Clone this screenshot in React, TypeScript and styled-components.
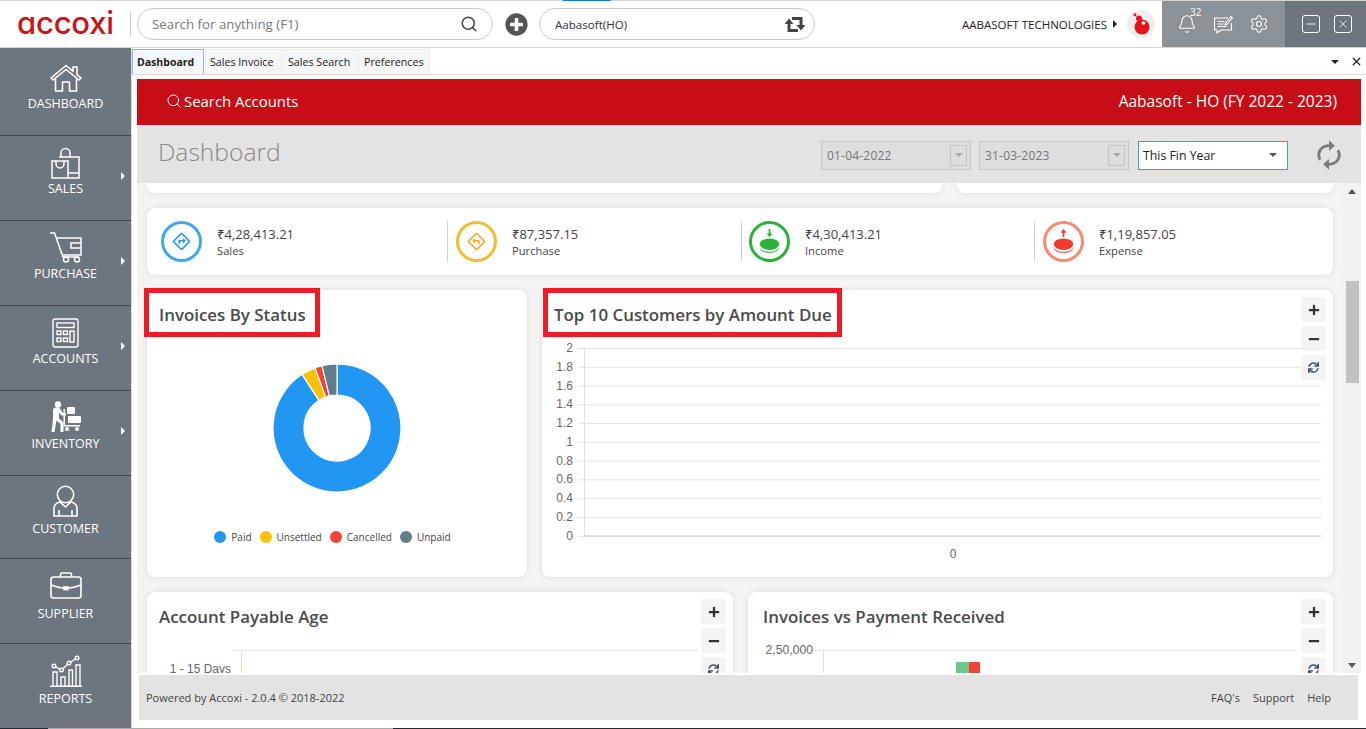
import styled, { createGlobalStyle } from "styled-components";
import { Bell, Minus, Search, Settings, X } from "lucide-react";
import { FaMinus, FaPlus, FaPlusCircle, FaSync } from "react-icons/fa";
import { MdOutlineDirections, MdSync } from "react-icons/md";

const GlobalStyle = createGlobalStyle`
  * { box-sizing: border-box; }
  html, body { margin: 0; padding: 0; background: #fff; overflow: hidden; }
  body { font-family: "Open Sans", "Noto Sans", sans-serif; color: #333; }
`;

const Page = styled.div`
  position: relative;
  display: flex;
  flex-direction: column;
  width: 1366px;
  height: 729px;
  overflow: hidden;
`;

const TopBar = styled.header`
  display: flex;
  align-items: center;
  height: 48px;
  border-top: 1px solid #d6d6d6;
  border-bottom: 1px solid #d2d2d2;
`;

const LoadingMark = styled.span`
  position: absolute;
  top: 0;
  left: 563px;
  width: 48px;
  height: 1px;
  background: #0a7bd6;
`;

const Logo = styled.div`
  width: 131px;
  height: 26px;
  padding-left: 17px;
  border-right: 1px solid #c8c8c8;
  color: #c8141c;
  font-family: Inter, "Open Sans", sans-serif;
  font-feature-settings: "cv11";
  font-size: 31px;
  font-weight: 500;
  line-height: 24px;
  letter-spacing: -0.2px;
`;

const Pill = styled.div<{ $width: number }>`
  display: flex;
  align-items: center;
  justify-content: space-between;
  width: ${({ $width }) => $width}px;
  height: 32px;
  border: 1px solid #c9c9c9;
  border-radius: 16px;
`;

const SearchPill = styled(Pill)`
  margin-left: 6px;
  padding: 0 14px;
  color: #777;
  font-size: 13.3px;
`;

const CompanyPill = styled(Pill)`
  padding: 0 9px 0 15px;
  color: #333;
  font-size: 11.6px;
`;

const AddButton = styled.span`
  display: flex;
  margin: 0 11px 0 12px;
  color: #555;
`;

const Owner = styled.div`
  display: flex;
  align-items: center;
  margin-left: auto;
  color: #222;
  font-size: 11.5px;
`;

const OwnerCaret = styled.span`
  width: 0;
  height: 0;
  margin: 0 10px 0 6px;
  border-top: 4px solid transparent;
  border-bottom: 4px solid transparent;
  border-left: 4px solid #222;
`;

const Avatar = styled.span`
  display: flex;
  align-items: center;
  justify-content: center;
  width: 28px;
  height: 28px;
  margin-right: 7px;
  border-radius: 50%;
  background: #eeeeee;
`;

const ToolGroup = styled.div`
  position: relative;
  display: flex;
  align-items: center;
  gap: 16px;
  width: 123px;
  height: 46px;
  padding-left: 15px;
  color: #fff;
  background: #8a9197;
`;

const BellCount = styled.span`
  position: absolute;
  top: 4px;
  left: 28px;
  font-size: 10px;
`;

const WindowGroup = styled.div`
  display: flex;
  align-items: center;
  gap: 14px;
  width: 81px;
  height: 46px;
  padding-left: 17px;
  background: #6d757c;
`;

const WindowButton = styled.span`
  display: flex;
  align-items: center;
  justify-content: center;
  width: 18px;
  height: 18px;
  border: 1.4px solid #fff;
  border-radius: 3px;
  color: #fff;
`;

const Body = styled.div`
  display: flex;
  flex: 1;
  min-height: 0;
`;

const Sidebar = styled.nav`
  flex: none;
  width: 132px;
  border-right: 1px solid #dedede;
  background: #6d767e;
`;

const NavItem = styled.a<{ $height: number; $top: number; $gap: number }>`
  position: relative;
  display: flex;
  flex-direction: column;
  align-items: center;
  gap: ${({ $gap }) => $gap}px;
  height: ${({ $height }) => $height}px;
  padding-top: ${({ $top }) => $top}px;
  border-bottom: 1px solid #43484d;
  color: #fff;
  font-size: 12.5px;
  line-height: 18px;
  &:last-child { border-bottom: none; }
`;

const NavIcon = styled.span`
  display: flex;
  flex: none;
  align-items: center;
  justify-content: center;
  height: 32px;
`;

const NavArrow = styled.span`
  position: absolute;
  top: 36px;
  right: 6px;
  width: 0;
  height: 0;
  border-top: 4px solid transparent;
  border-bottom: 4px solid transparent;
  border-left: 4px solid #fff;
`;

const Main = styled.main`
  display: flex;
  flex: 1;
  flex-direction: column;
  min-width: 0;
`;

const TabRow = styled.div`
  display: flex;
  align-items: flex-end;
  height: 27px;
  padding-right: 3px;
  border-bottom: 1px solid #dcdcdc;
`;

const Tab = styled.span<{ $width: number; $active?: boolean }>`
  display: flex;
  flex: none;
  align-items: center;
  width: ${({ $width }) => $width}px;
  height: 25px;
  margin-right: 1px;
  padding-left: 4px;
  border: 1px solid ${({ $active }) => ($active ? "#8db9e6" : "#eeeeee")};
  border-bottom: none;
  color: #222;
  font-size: ${({ $active }) => ($active ? 10.5 : 10.7)}px;
  font-weight: ${({ $active }) => ($active ? 700 : 400)};
  background: #f5f6f8;
`;

const TabTools = styled.div`
  display: flex;
  align-items: center;
  gap: 11px;
  height: 25px;
  margin-left: auto;
  color: #222;
`;

const TabCaret = styled.span`
  width: 0;
  height: 0;
  border-left: 4px solid transparent;
  border-right: 4px solid transparent;
  border-top: 4px solid #222;
`;

const Panel = styled.div`
  display: flex;
  flex: 1;
  flex-direction: column;
  min-height: 0;
  margin: 4px 5px 0 5px;
`;

const Banner = styled.div`
  display: flex;
  flex: none;
  align-items: center;
  justify-content: space-between;
  height: 46px;
  padding: 0 24px 2px 29px;
  color: #fff;
  font-size: 14.9px;
  background: #c70e16;
`;

const BannerSearch = styled.span`
  display: flex;
  align-items: center;
  gap: 2px;
`;

const BannerTitle = styled.span`
  font-size: 15.5px;
`;

const PageHead = styled.div`
  display: flex;
  flex: none;
  align-items: center;
  height: 58px;
  padding: 0 16px 0 21px;
  background: #e3e3e3;
`;

const PageTitle = styled.h1`
  flex: 1;
  margin: 0 0 6px;
  color: #8a8a8a;
  font-size: 24.6px;
  font-weight: 300;
`;

const DateBox = styled.div`
  display: flex;
  align-items: center;
  justify-content: space-between;
  width: 150px;
  height: 29px;
  margin: 2px 8px 0 0;
  padding: 0 3px 0 5px;
  border: 1px solid #c6c6c6;
  color: #777;
  font-size: 12px;
  letter-spacing: 0.2px;
  background: #dedede;
`;

const DateDrop = styled.span`
  display: flex;
  align-items: center;
  justify-content: center;
  width: 17px;
  height: 21px;
  border: 1px solid #c4c4c4;
`;

const GreyCaret = styled.span`
  width: 0;
  height: 0;
  border-left: 4px solid transparent;
  border-right: 4px solid transparent;
  border-top: 4px solid #a8a8a8;
`;

const Select = styled.div`
  display: flex;
  align-items: center;
  justify-content: space-between;
  width: 150px;
  height: 29px;
  margin: 2px 25px 0 1px;
  padding: 0 10px 0 4px;
  border: 1px solid #3d9bf0;
  color: #222;
  font-size: 12.3px;
  background: #fff;
`;

const SelectCaret = styled(GreyCaret)`
  border-top-color: #555;
`;

const ReloadIcon = styled.span`
  display: flex;
  margin-top: 2px;
  color: #7b7b7b;
  transform: scaleX(-1.1);
`;

const ScrollRow = styled.div`
  display: flex;
  flex: none;
  height: 490px;
  background: #f4f4f4;
`;

const ScrollContent = styled.div`
  display: grid;
  flex: 1;
  align-content: start;
  gap: 15px;
  padding: 0 10px;
  overflow: hidden;
`;

const CardRow = styled.div<{ $columns: string }>`
  display: grid;
  grid-template-columns: ${({ $columns }) => $columns};
  gap: 15px;
`;

const Card = styled.section<{ $height: number }>`
  position: relative;
  height: ${({ $height }) => $height}px;
  border-radius: 8px;
  background: #fff;
  box-shadow: 0 0 6px rgba(0, 0, 0, 0.1);
`;

const StubCard = styled(Card)`
  border-radius: 0 0 8px 8px;
`;

const KpiCard = styled(Card)`
  display: grid;
  grid-template-columns: 300px 294px 293px 1fr;
  align-items: center;
`;

const Kpi = styled.div<{ $pad: number; $first?: boolean }>`
  display: flex;
  align-items: center;
  height: 41px;
  padding-left: ${({ $pad }) => $pad}px;
  border-left: ${({ $first }) => ($first ? "none" : "1px solid #d2d2d2")};
`;

const KpiRing = styled.span<{ $color: string; $icon: string }>`
  display: flex;
  flex: none;
  align-items: center;
  justify-content: center;
  width: 41px;
  height: 41px;
  border: 3px solid ${({ $color }) => $color};
  border-radius: 50%;
  color: ${({ $icon }) => $icon};
`;

const MirroredIcon = styled.span`
  display: flex;
  transform: scaleX(-1);
`;

const KpiText = styled.div`
  margin: 2px 0 0 15px;
`;

const KpiValue = styled.div`
  color: #444;
  font-size: 13px;
  font-weight: 500;
  line-height: 17px;
`;

const KpiLabel = styled.div`
  color: #444;
  font-size: 11.2px;
  line-height: 16px;
`;

const CardTitle = styled.h2<{ $indent?: number }>`
  position: relative;
  display: flex;
  align-items: center;
  width: fit-content;
  height: 48px;
  margin: 0 0 2px;
  padding-left: ${({ $indent }) => $indent ?? 12}px;
  color: #4a4a4a;
  font-size: 16.9px;
  font-weight: 600;
`;

const Marker = styled.span<{ $left: number; $right: number }>`
  position: absolute;
  top: -2px;
  left: ${({ $left }) => $left}px;
  right: ${({ $right }) => $right}px;
  bottom: 1px;
  border: 5px solid #ed1c24;
`;

const ZoomTools = styled.div`
  position: absolute;
  top: 7px;
  right: 7px;
  display: flex;
  flex-direction: column;
  gap: 4px;
`;

const ZoomButton = styled.span`
  display: flex;
  align-items: center;
  justify-content: center;
  width: 25px;
  height: 25px;
  border-radius: 3px;
  color: #333;
  background: #f4f4f4;
`;

const DonutWrap = styled.div`
  display: flex;
  justify-content: center;
  margin-top: 24px;
  padding-top: 2px;
`;

const Legend = styled.div`
  display: flex;
  justify-content: center;
  gap: 8px;
  margin-top: 38px;
  padding-right: 9px;
  color: #444;
  font-size: 10px;
  line-height: 14px;
`;

const LegendItem = styled.span`
  display: flex;
  align-items: center;
  gap: 5px;
`;

const LegendDot = styled.i<{ $color: string }>`
  width: 12px;
  height: 12px;
  border-radius: 50%;
  background: ${({ $color }) => $color};
`;

const ChartSvg = styled.svg`
  display: block;
  font-family: "Liberation Sans", Arial, sans-serif;
  font-size: 12px;
`;

const ScrollBar = styled.div`
  display: flex;
  flex: none;
  flex-direction: column;
  align-items: center;
  width: 18px;
  padding: 6px 0 5px;
  background: #f1f1f1;
`;

const ScrollThumb = styled.span`
  width: 13px;
  height: 102px;
  margin-top: 87px;
  background: #c1c1c1;
`;

const ArrowUp = styled.span`
  width: 0;
  height: 0;
  border-left: 4px solid transparent;
  border-right: 4px solid transparent;
  border-bottom: 5px solid #555;
`;

const ArrowDown = styled.span`
  width: 0;
  height: 0;
  margin-top: auto;
  border-left: 4px solid transparent;
  border-right: 4px solid transparent;
  border-top: 5px solid #555;
`;

const Footer = styled.footer`
  display: flex;
  flex: none;
  align-items: center;
  justify-content: space-between;
  height: 45px;
  margin: 2px 3px 0 2px;
  padding: 0 27px 0 7px;
  color: #444;
  font-size: 11px;
  background: #e3e3e3;
`;

const FooterLinks = styled.div`
  display: flex;
  gap: 13px;
`;

const TaskStrip = styled.div`
  display: grid;
  flex: none;
  grid-template-columns: 48px 345px 1fr;
  height: 1px;
`;

const StripPart = styled.span<{ $color: string }>`
  background: ${({ $color }) => $color};
`;

function HomeIcon() {
  return (
    <svg width="32" height="28" viewBox="0 0 32 28" fill="none" stroke="#fff" strokeWidth="1.6" strokeLinejoin="round">
      <path d="M1 14 16 1.5l7 5.8V3h4v7.6l4 3.4-2 2L16 5.5 3 16z" />
      <path d="M5.5 15v12h7v-9h7v9h7V15" />
    </svg>
  );
}

function BagsIcon() {
  return (
    <svg width="29" height="32" viewBox="0 0 29 32" fill="none" stroke="#fff" strokeWidth="1.5">
      <path d="M8 10h20v21H1V14h16v17" />
      <path d="M10 10V6a4.5 4.5 0 0 1 9 0v4" />
      <path d="M5 14v3a4 4 0 0 0 8 0v-3M17 26h11" />
    </svg>
  );
}

function CartIcon() {
  return (
    <svg width="33" height="31" viewBox="0 0 33 31" fill="none" stroke="#fff" strokeWidth="1.5">
      <path d="M1 1h4.5L14 25h16" />
      <path d="M7 6h25v17H13M32 11H22v5h10" />
      <circle cx="17" cy="27.5" r="2.5" />
      <circle cx="28" cy="27.5" r="2.5" />
    </svg>
  );
}

function CalcIcon() {
  return (
    <svg width="27" height="30" viewBox="0 0 27 30" fill="none" stroke="#fff" strokeWidth="1.4">
      <rect x="1" y="1" width="25" height="28" rx="2" />
      <rect x="5" y="5" width="17" height="4.5" />
      <rect x="5" y="13" width="4" height="3.5" />
      <rect x="11.5" y="13" width="4" height="3.5" />
      <rect x="5" y="20" width="4" height="3.5" />
      <rect x="11.5" y="20" width="4" height="3.5" />
      <rect x="18" y="13" width="4" height="11" />
    </svg>
  );
}

function InventoryIcon() {
  return (
    <svg width="32" height="32" viewBox="0 0 32 32" fill="#fff">
      <circle cx="8" cy="3.5" r="3.2" />
      <path d="M3 9c0-1.5 1.5-2.5 3-2.5h3l4 5.5h3v2.5h-4.5L9 11.5v6l4.5 4V31h-3v-8l-4-3.5L4.5 31H1.5l1.5-13z" />
      <rect x="17" y="6" width="8" height="7" rx="1" />
      <rect x="18" y="15" width="13" height="7" rx="1" />
      <path d="M15 8v16h15v1.5H13.5V8z" />
      <circle cx="17" cy="28" r="2" />
      <circle cx="27" cy="28" r="2" />
    </svg>
  );
}

function CustomerIcon() {
  return (
    <svg width="25" height="32" viewBox="0 0 25 32" fill="none" stroke="#fff" strokeWidth="1.6">
      <circle cx="12.5" cy="9.5" r="8.2" />
      <path d="M7 17c-4 1-6 3-6 6.5V31h23v-7.5c0-3.500-2-5.500-6-6.500l-5.500 5z" />
      <path d="M6 25v6M19 25v6" />
    </svg>
  );
}

function CaseIcon() {
  return (
    <svg width="32" height="27" viewBox="0 0 32 27" fill="none" stroke="#fff" strokeWidth="1.6">
      <rect x="1" y="5" width="30" height="21" rx="2.5" />
      <path d="M10.5 5V2.500c0-.8.7-1.500 1.500-1.500h8c.8 0 1.500.7 1.500 1.500V5" />
      <path d="M1 13c5 2 9 3 13 3.300M31 13c-5 2-9 3-13 3.300" />
      <rect x="14" y="15" width="4" height="2.5" fill="#fff" />
    </svg>
  );
}

function ReportsIcon() {
  return (
    <svg width="32" height="32" viewBox="0 0 32 32" fill="none" stroke="#fff" strokeWidth="1.4">
      <path d="M0 31.3h32" strokeWidth="1.6" />
      <path d="M3 31V17h4v14M11 31v-9h4v9M19 31V15h3.500v16M26 31V10h4v21" />
      <circle cx="4" cy="11" r="1.8" />
      <circle cx="11.5" cy="15" r="1.8" />
      <circle cx="19" cy="8" r="1.8" />
      <circle cx="27" cy="3" r="1.8" />
      <path d="m5.600 11.900 4.300 2.200M13 13.700l4.600-4.400M20.600 7l4.800-3" />
    </svg>
  );
}

function ChatIcon() {
  return (
    <svg width="20" height="19" viewBox="0 0 20 19" fill="none" stroke="#fff" strokeWidth="1.1">
      <path d="M15 3H1.500v12H4v3l4-3h10.500V8" />
      <path d="M4.500 6.500h7M4.500 9h6M4.500 11.500h9" />
      <path d="m12.500 8 5.500-6.500 1.500 1.300-5.500 6.500-2 .5z" />
    </svg>
  );
}

function SwitchIcon() {
  return (
    <svg width="20" height="17" viewBox="0 0 20 17" fill="none" stroke="#444" strokeWidth="3">
      <path d="M7 2.500h9V10M4 6v8.500h9" />
      <path d="M11.500 9h9L16 14.500zM-.5 8h9L4 2.500z" fill="#444" stroke="none" />
    </svg>
  );
}

function AvatarMark() {
  return (
    <svg width="18" height="22" viewBox="0 0 18 22">
      <circle cx="10" cy="14" r="7.5" fill="#e5141b" />
      <circle cx="7" cy="5.5" r="3" fill="#e5141b" />
      <circle cx="3" cy="1.8" r="1.5" fill="#e5141b" />
      <circle cx="11.5" cy="10" r="1.8" fill="#fff" />
    </svg>
  );
}

function CoinIcon({ color, up }: { color: string; up?: boolean }) {
  return (
    <svg width="23" height="27" viewBox="0 0 26 30" fill={color}>
      <path d={up ? "M13 1l-3.500 4h2.500v5h2V5h2.500z" : "M12 1h2v5h2.500L13 10 9.500 6H12z"} />
      <ellipse cx="13" cy="18" rx="11" ry="6.5" />
      <path d="M2 22c2 3 6 4.500 11 4.500S22 25 24 22c.3 3-4 6-11 6S1.700 25 2 22z" opacity="0.75" />
    </svg>
  );
}

const NAV = [
  { label: "DASHBOARD", icon: <HomeIcon />, height: 88, top: 14, gap: 1 },
  { label: "SALES", icon: <BagsIcon />, height: 85, top: 11, gap: 1, more: true },
  { label: "PURCHASE", icon: <CartIcon />, height: 85, top: 10, gap: 2, more: true },
  { label: "ACCOUNTS", icon: <CalcIcon />, height: 85, top: 11, gap: 1, more: true },
  { label: "INVENTORY", icon: <InventoryIcon />, height: 85, top: 10, gap: 2, more: true },
  { label: "CUSTOMER", icon: <CustomerIcon />, height: 83, top: 9, gap: 3 },
  { label: "SUPPLIER", icon: <CaseIcon />, height: 85, top: 10, gap: 4 },
  { label: "REPORTS", icon: <ReportsIcon />, height: 84, top: 11, gap: 3 },
];

const TABS = [
  { label: "Dashboard", width: 72, active: true },
  { label: "Sales Invoice", width: 77 },
  { label: "Sales Search", width: 75 },
  { label: "Preferences", width: 71 },
];

const SLICES = [
  { name: "Paid", color: "#2196f3", from: 0, to: 327 },
  { name: "Unsettled", color: "#ffc107", from: 327, to: 340 },
  { name: "Cancelled", color: "#f44336", from: 340, to: 346.5 },
  { name: "Unpaid", color: "#607d8b", from: 346.5, to: 360 },
];

function point(r: number, deg: number) {
  const rad = ((deg - 90) * Math.PI) / 180;
  return `${(64 + r * Math.cos(rad)).toFixed(2)} ${(64 + r * Math.sin(rad)).toFixed(2)}`;
}

function slicePath(from: number, to: number) {
  const large = to - from > 180 ? 1 : 0;
  return `M${point(64, from)}A64 64 0 ${large} 1 ${point(64, to)}L${point(33, to)}A33 33 0 ${large} 0 ${point(33, from)}Z`;
}

function Donut() {
  return (
    <svg width="128" height="128" viewBox="0 0 128 128">
      {SLICES.map((s) => (
        <path key={s.name} d={slicePath(s.from, s.to)} fill={s.color} stroke="#fff" strokeWidth="1.2" />
      ))}
    </svg>
  );
}

const Y_TICKS = ["2", "1.8", "1.6", "1.4", "1.2", "1", "0.8", "0.6", "0.4", "0.2", "0"];

function CustomerChart() {
  return (
    <ChartSvg width="791" height="230" viewBox="0 0 791 230">
      {Y_TICKS.map((t, i) => {
        const y = 8.5 + i * 18.77;
        return (
          <g key={t}>
            <line x1="36" x2="779" y1={y} y2={y} stroke="#e4e4e4" />
            <text x="31" y={y + 3.5} textAnchor="end" fill="#666">{t}</text>
          </g>
        );
      })}
      <line x1="42.5" x2="42.5" y1="8" y2="196" stroke="#e0e0e0" />
      <line x1="42" x2="779" y1="196" y2="196" stroke="#cfcfcf" />
      <text x="411" y="218" textAnchor="middle" fill="#666">0</text>
    </ChartSvg>
  );
}

function PayableChart() {
  return (
    <ChartSvg width="586" height="60" viewBox="0 0 586 60">
      <line x1="86" x2="551" y1="8.5" y2="8.5" stroke="#e4e4e4" />
      <line x1="94.5" x2="94.5" y1="8" y2="18" stroke="#e0e0e0" />
      <line x1="94.5" x2="94.5" y1="18" y2="60" stroke="#f3d79b" />
      <text x="84" y="31" textAnchor="end" fill="#666">1 - 15 Days</text>
    </ChartSvg>
  );
}

function PaymentChart() {
  return (
    <ChartSvg width="585" height="60" viewBox="0 0 585 60">
      <line x1="67" x2="549" y1="8.5" y2="8.5" stroke="#e4e4e4" />
      <line x1="75.5" x2="75.5" y1="8" y2="60" stroke="#e0e0e0" />
      <text x="65" y="12" textAnchor="end" fill="#666" fontSize="12.2">2,50,000</text>
      <rect x="208" y="20" width="13" height="40" fill="#6cc788" />
      <rect x="221" y="20" width="11" height="40" fill="#f44336" />
    </ChartSvg>
  );
}

function ChartZoom() {
  return (
    <ZoomTools>
      <ZoomButton><FaPlus size={12} /></ZoomButton>
      <ZoomButton><FaMinus size={12} /></ZoomButton>
      <ZoomButton><FaSync size={11} color="#44525e" /></ZoomButton>
    </ZoomTools>
  );
}

export default function App() {
  return (
    <Page>
      <GlobalStyle />
      <LoadingMark />
      <TopBar>
        <Logo>accoxi</Logo>
        <SearchPill $width={356}>
          Search for anything (F1)
          <Search size={18} color="#444" strokeWidth={2} />
        </SearchPill>
        <AddButton><FaPlusCircle size={23} /></AddButton>
        <CompanyPill $width={276}>
          Aabasoft(HO)
          <SwitchIcon />
        </CompanyPill>
        <Owner>
          AABASOFT TECHNOLOGIES
          <OwnerCaret />
          <Avatar><AvatarMark /></Avatar>
        </Owner>
        <ToolGroup>
          <Bell size={20} strokeWidth={1.3} />
          <BellCount>32</BellCount>
          <ChatIcon />
          <Settings size={20} strokeWidth={1.3} />
        </ToolGroup>
        <WindowGroup>
          <WindowButton><Minus size={14} strokeWidth={1.5} /></WindowButton>
          <WindowButton><X size={12} strokeWidth={1.5} /></WindowButton>
        </WindowGroup>
      </TopBar>

      <Body>
        <Sidebar>
          {NAV.map((item) => (
            <NavItem key={item.label} $height={item.height} $top={item.top} $gap={item.gap}>
              <NavIcon>{item.icon}</NavIcon>
              {item.label}
              {item.more && <NavArrow />}
            </NavItem>
          ))}
        </Sidebar>

        <Main>
          <TabRow>
            {TABS.map((tab) => (
              <Tab key={tab.label} $width={tab.width} $active={tab.active}>{tab.label}</Tab>
            ))}
            <TabTools>
              <TabCaret />
              <X size={13} strokeWidth={2.4} />
            </TabTools>
          </TabRow>

          <Panel>
            <Banner>
              <BannerSearch>
                <Search size={16} strokeWidth={1.5} />
                Search Accounts
              </BannerSearch>
              <BannerTitle>Aabasoft - HO (FY 2022 - 2023)</BannerTitle>
            </Banner>

            <PageHead>
              <PageTitle>Dashboard</PageTitle>
              <DateBox>01-04-2022<DateDrop><GreyCaret /></DateDrop></DateBox>
              <DateBox>31-03-2023<DateDrop><GreyCaret /></DateDrop></DateBox>
              <Select>This Fin Year<SelectCaret /></Select>
              <ReloadIcon><MdSync size={32} /></ReloadIcon>
            </PageHead>

            <ScrollRow>
              <ScrollContent>
                <CardRow $columns="795px 1fr">
                  <StubCard $height={10} />
                  <StubCard $height={10} />
                </CardRow>

                <KpiCard $height={67}>
                  <Kpi $first $pad={14}>
                    <KpiRing $color="#3fa6f5" $icon="#2196f3"><MdOutlineDirections size={19} /></KpiRing>
                    <KpiText><KpiValue>₹4,28,413.21</KpiValue><KpiLabel>Sales</KpiLabel></KpiText>
                  </Kpi>
                  <Kpi $pad={8}>
                    <KpiRing $color="#f4bb30" $icon="#f5a623">
                      <MirroredIcon><MdOutlineDirections size={19} /></MirroredIcon>
                    </KpiRing>
                    <KpiText><KpiValue>₹87,357.15</KpiValue><KpiLabel>Purchase</KpiLabel></KpiText>
                  </Kpi>
                  <Kpi $pad={7}>
                    <KpiRing $color="#2eb03c" $icon="#2eb03c"><CoinIcon color="#2eb03c" /></KpiRing>
                    <KpiText><KpiValue>₹4,30,413.21</KpiValue><KpiLabel>Income</KpiLabel></KpiText>
                  </Kpi>
                  <Kpi $pad={8}>
                    <KpiRing $color="#f98a72" $icon="#f03c30"><CoinIcon color="#f03c30" up /></KpiRing>
                    <KpiText><KpiValue>₹1,19,857.05</KpiValue><KpiLabel>Expense</KpiLabel></KpiText>
                  </Kpi>
                </KpiCard>

                <CardRow $columns="380px 1fr">
                  <Card $height={287}>
                    <CardTitle>Invoices By Status<Marker $left={-3} $right={-14} /></CardTitle>
                    <DonutWrap><Donut /></DonutWrap>
                    <Legend>
                      {SLICES.map((s) => (
                        <LegendItem key={s.name}><LegendDot $color={s.color} />{s.name}</LegendItem>
                      ))}
                    </Legend>
                  </Card>
                  <Card $height={287}>
                    <CardTitle>Top 10 Customers by Amount Due<Marker $left={1} $right={-10} /></CardTitle>
                    <CustomerChart />
                    <ChartZoom />
                  </Card>
                </CardRow>

                <CardRow $columns="586px 1fr">
                  <Card $height={200}>
                    <CardTitle>Account Payable Age</CardTitle>
                    <PayableChart />
                    <ChartZoom />
                  </Card>
                  <Card $height={200}>
                    <CardTitle $indent={15}>Invoices vs Payment Received</CardTitle>
                    <PaymentChart />
                    <ChartZoom />
                  </Card>
                </CardRow>
              </ScrollContent>
              <ScrollBar>
                <ArrowUp />
                <ScrollThumb />
                <ArrowDown />
              </ScrollBar>
            </ScrollRow>

            <Footer>
              <span>Powered by Accoxi - 2.0.4 © 2018-2022</span>
              <FooterLinks><span>FAQ's</span><span>Support</span><span>Help</span></FooterLinks>
            </Footer>
          </Panel>
        </Main>
      </Body>

      <TaskStrip>
        <StripPart $color="#1c2b36" />
        <StripPart $color="#a9acae" />
        <StripPart $color="#1c2b36" />
      </TaskStrip>
    </Page>
  );
}
